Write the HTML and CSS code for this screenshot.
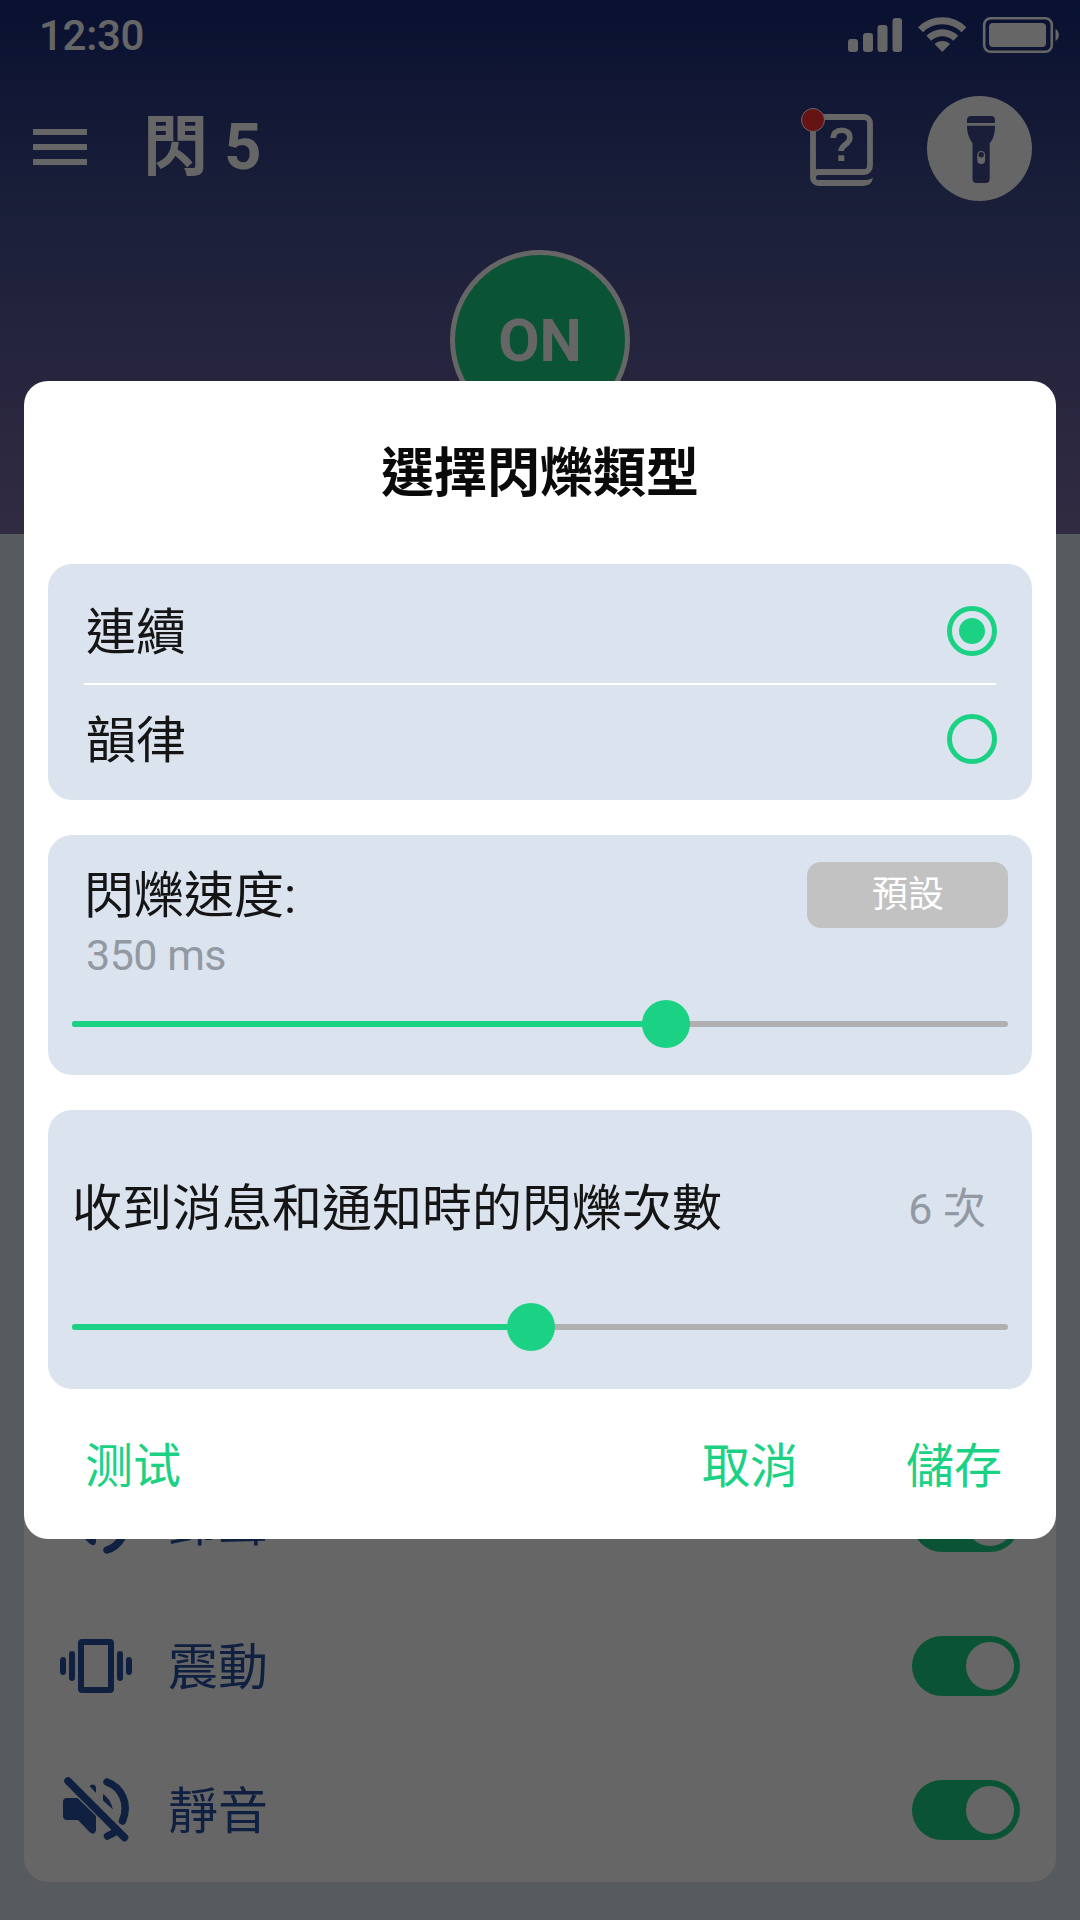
FILE: index.html
```html
<!DOCTYPE html>
<html lang="zh-Hant">
<head>
<meta charset="utf-8">
<title>閃 5</title>
<link rel="stylesheet" href="styles.css">
</head>
<body>
<div class="screen">
  <header class="hero">
    <div class="status-bar">
      <span class="clock">12:30</span>
      <svg class="status-icons" width="216" height="44" viewBox="0 0 216 44" fill="#fff">
        <rect x="4" y="26" width="10" height="13" rx="3"/>
        <rect x="19" y="20" width="10" height="19" rx="3"/>
        <rect x="33.500" y="12" width="10" height="27" rx="3"/>
        <rect x="48.500" y="5" width="9.500" height="34" rx="3"/>
        <g fill="none" stroke="#fff" stroke-width="7">
          <path d="M76.500 16.700a31 31 0 0 1 43.500 0"/>
          <path d="M84.800 25.200a19.200 19.200 0 0 1 27 0"/>
        </g>
        <path d="M98.300 39l-7.800-8a11.300 11.300 0 0 1 15.600 0z"/>
        <rect x="140.200" y="5.200" width="67.600" height="33.600" rx="6.500" fill="none" stroke="#fff" stroke-width="2.600"/>
        <rect x="145" y="10" width="57" height="24" rx="4"/>
        <path d="M211.500 16a7 7 0 0 1 0 12z"/>
      </svg>
    </div>
    <div class="app-bar">
      <svg class="menu-icon" width="54" height="36" viewBox="0 0 54 36" fill="#fff"><path d="M0 0h54v6H0zM0 15h54v6H0zM0 30h54v6H0z"/></svg>
      <h1 class="app-title">閃 5</h1>
      <div class="help">
        <svg width="64" height="72" viewBox="0 0 64 72" fill="none" stroke="#fff">
          <path d="M3 63.500V9.500a6.500 6.500 0 0 1 6.500-6.500H54a6 6 0 0 1 6 6v43a6 6 0 0 1-6 6H8.500a5.500 5.500 0 0 0 0 11" stroke-width="5.800"/>
          <path d="M8 66.100h46q6 0 9-2.600-1 8.400-10 8.400H8z" fill="#fff" stroke="none"/>
          <path d="M23.300 24c0-5 3.400-7.800 8.300-7.800s8.300 2.800 8.300 7.600c0 6.800-8.800 6.500-8.800 13.200" stroke-width="5.600"/>
          <path d="M28.300 41.300h6v5.700h-6z" fill="#fff" stroke="none"/>
        </svg>
        <span class="badge"></span>
      </div>
      <div class="torch">
        <svg width="28" height="68" viewBox="0 0 28 68" fill="#434c8c">
          <path d="M0 7V4q0-4 4-4h20q4 0 4 4v3zM0 9.700h28c0 8.500-2 13.800-5.300 17.500V63q0 4-4 4H9.500q-4 0-4-4V27.200C2 22 0 17 0 9.700z"/>
          <rect x="10.300" y="35" width="7.800" height="13" rx="3.900" fill="#fff"/>
          <circle cx="14.200" cy="38.800" r="2.700"/>
        </svg>
      </div>
    </div>
    <div class="power">ON</div>
  </header>
  <main class="settings">
    <div class="setting">
      <svg class="setting-icon" width="72" height="72" viewBox="0 0 72 72"><path class="solid" d="M7 24q-4 0-4 4v15q0 4 4 4h12l10.500 10.500q5 4 6.500-1.500V17q-1.500-5-6.500-2L19 24z"/><path class="line" d="M47 8c25 9 25 48 0 56M46 25q10 11 0 22"/></svg>
      <span class="setting-name ringtone" lang="ja">鈴聲</span>
      <span class="toggle"></span>
    </div>
    <div class="setting">
      <svg class="setting-icon" width="72" height="72" viewBox="0 0 72 72"><g class="solid"><path fill-rule="evenodd" d="M22 9h28q4 0 4 4v46q0 4-4 4H22q-4 0-4-4V13q0-4 4-4zm2 6v42h24V15z"/><rect x="0" y="27" width="6" height="18" rx="3"/><rect x="9" y="21" width="6" height="30" rx="3"/><rect x="57" y="21" width="6" height="30" rx="3"/><rect x="66" y="27" width="6" height="18" rx="3"/></g></svg>
      <span class="setting-name">震動</span>
      <span class="toggle"></span>
    </div>
    <div class="setting">
      <svg class="setting-icon" width="72" height="72" viewBox="0 0 72 72"><g class="solid"><path d="M7 24h10.500L36 42v14.500q-1.500 5-6 2L18 46H7q-4 0-4-4V28q0-4 4-4z"/><path d="M29.500 12q5-3.300 6.500 1v6zM43 20q7 4 10 15.500L43 26.500z"/></g><path class="line" d="M8 7l56.500 56.500"/><path class="line" d="M47 8c15 5.500 22.500 22 15.500 39" stroke-linecap="butt"/><path class="line" d="M47.500 62l9-4.500"/></svg>
      <span class="setting-name">靜音</span>
      <span class="toggle"></span>
    </div>
  </main>
</div>
<div class="scrim">
  <section class="dialog">
    <h2 class="dialog-title">選擇閃爍類型</h2>
    <div class="panel options">
      <div class="option"><span class="option-name">連續</span><span class="radio checked"></span></div>
      <div class="option second"><span class="option-name">韻律</span><span class="radio"></span></div>
    </div>
    <div class="panel speed">
      <div class="speed-head"><span class="label">閃爍速度:</span><span class="reset">預設</span></div>
      <div class="value">350 ms</div>
      <div class="slider"><div class="fill" style="width:63.460%"><span class="thumb"></span></div></div>
    </div>
    <div class="panel count">
      <div class="count-head"><span class="label">收到消息和通知時的閃爍次數</span><span class="value">6 次</span></div>
      <div class="slider"><div class="fill" style="width:49.040%"><span class="thumb"></span></div></div>
    </div>
    <footer class="actions"><span class="test" lang="zh-Hans">测试</span><span>取消</span><span>儲存</span></footer>
  </section>
</div>
</body>
</html>
```
FILE: styles.css
```css
* { box-sizing: border-box; }
body {
  margin: 0;
  width: 1080px;
  height: 1920px;
  position: relative;
  overflow: hidden;
  font-family: Roboto, "Noto Sans CJK TC", sans-serif;
  background: #dae4ef;
}
svg { display: block; flex: none; }
h1, h2 { margin: 0; }

.screen { display: flex; flex-direction: column; height: 1920px; }
.hero {
  display: flex;
  flex-direction: column;
  height: 534px;
  background: linear-gradient(#182b7a, #444f90 40%, #7d6ca5);
  color: #fff;
}
.status-bar {
  display: flex;
  justify-content: space-between;
  height: 70px;
  padding: 13px 20px 0 39px;
}
.clock { font-size: 42px; font-weight: 500; line-height: 46px; letter-spacing: -.3px; }
.app-bar { display: flex; align-items: center; height: 157px; padding: 0 48px 0 33px; }
.menu-icon { margin-bottom: 3px; }
.app-title { margin-left: 56px; padding-bottom: 3px; font-size: 65px; font-weight: 700; line-height: 80px; flex: 1; }
.help { position: relative; margin: 2px 53px 0 0; }
.badge {
  position: absolute;
  left: -9px;
  top: -6px;
  width: 24px;
  height: 24px;
  border: 1.500px solid #fff;
  border-radius: 50%;
  background: #ff3030;
}
.torch {
  display: flex;
  align-items: center;
  justify-content: center;
  width: 105px;
  height: 105px;
  padding: 3px 0 0 3px;
  border-radius: 50%;
  background: #fff;
}
.power {
  display: flex;
  align-items: center;
  justify-content: center;
  align-self: center;
  width: 180px;
  height: 180px;
  margin-top: 23px;
  border: 5px solid #fff;
  border-radius: 50%;
  background: #1bd284;
  font-size: 60px;
  font-weight: 700;
}

.settings {
  display: flex;
  flex-direction: column;
  justify-content: flex-end;
  flex: 1;
  margin: 36px 24px 38px;
  border-radius: 24px;
  background: #fff;
  color: #2852a2;
}
.setting { display: flex; align-items: center; height: 144px; padding: 0 36px; }
.setting-name { flex: 1; margin-left: 36px; padding-top: 3px; font-size: 50px; line-height: 72px; }
.ringtone { font-family: Roboto, "Noto Sans CJK JP", sans-serif; }
.solid { fill: #2852a2; }
.line { fill: none; stroke: #2852a2; stroke-width: 7.500; stroke-linecap: round; }
.toggle {
  display: flex;
  justify-content: flex-end;
  width: 108px;
  height: 60px;
  padding: 6px;
  border-radius: 30px;
  background: #1bd284;
}
.toggle::after { content: ""; width: 48px; height: 48px; border-radius: 50%; background: #fff; }

.scrim { position: absolute; inset: 0; background: rgba(0, 0, 0, .6); }
.dialog {
  position: absolute;
  left: 24px;
  top: 381px;
  width: 1032px;
  height: 1158px;
  padding: 0 24px;
  border-radius: 24px;
  background: #fff;
  color: #151515;
}
.dialog-title { height: 183px; line-height: 186px; text-align: center; font-size: 53px; font-weight: 700; color: #0a0a0a; }
.panel { border-radius: 24px; background: #dbe3ef; margin-bottom: 35px; font-size: 50px; }
.options { height: 236px; padding: 15px 36px 0; }
.option { display: flex; align-items: center; justify-content: space-between; height: 104px; padding-left: 2px; }
.option-name { padding-bottom: 7px; }
.option .radio { margin-right: -1px; }
.second { height: 110px; border-top: 2px solid #fff; }
.radio {
  display: flex;
  align-items: center;
  justify-content: center;
  width: 50px;
  height: 50px;
  border: 5px solid #1bd284;
  border-radius: 50%;
}
.checked::after { content: ""; width: 26px; height: 26px; border-radius: 50%; background: #1bd284; }

.speed { height: 240px; padding: 27px 24px 0; }
.speed-head { display: flex; justify-content: space-between; height: 66px; line-height: 66px; }
.speed .label { padding: 1px 0 0 12px; }
.speed .value { padding-left: 14px; letter-spacing: -.5px; }
.reset {
  width: 201px;
  padding-left: 1px;
  border-radius: 14px;
  background: #c2c2c2;
  color: #fff;
  font-size: 36px;
  line-height: 67px;
  text-align: center;
}
.value { font-size: 43px; line-height: 54px; color: #9299a3; }
.slider { height: 6px; border-radius: 3px; background: #b0b0b0; }
.speed .slider { margin-top: 39px; }
.fill { position: relative; height: 6px; border-radius: 3px; background: #1bd284; }
.thumb {
  position: absolute;
  right: -24px;
  top: -21px;
  width: 48px;
  height: 48px;
  border-radius: 50%;
  background: #1bd284;
}
.count { height: 279px; padding: 60px 24px 0; margin-bottom: 0; }
.count-head { display: flex; justify-content: space-between; align-items: center; height: 76px; margin-bottom: 78px; }
.count .label { padding-bottom: 9px; }
.count .value { padding: 2px 22px 0 0; }
.actions {
  display: flex;
  align-items: center;
  height: 145px;
  padding: 0 30px 0 37px;
  gap: 108px;
  font-size: 48px;
  color: #1bd284;
}
.test { flex: 1; font-family: Roboto, "Noto Sans CJK SC", sans-serif; }
```
